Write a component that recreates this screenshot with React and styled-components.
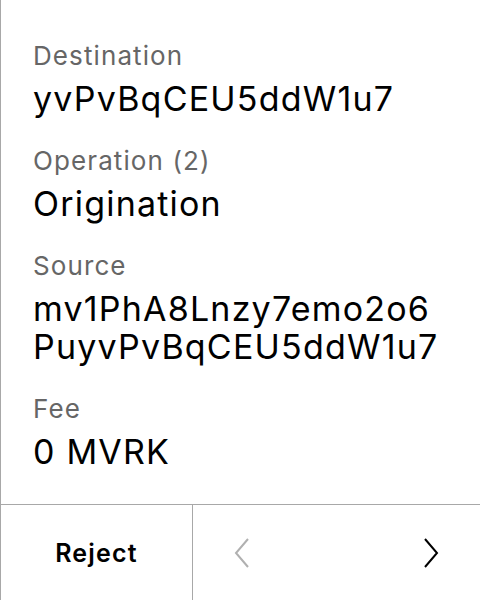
import React from "react";
import styled, { createGlobalStyle } from "styled-components";

const GlobalStyle = createGlobalStyle`
  html, body {
    margin: 0;
    padding: 0;
    background: #ffffff;
    font-family: Inter, "Noto Sans", sans-serif;
  }
`;

const Screen = styled.div`
  width: 480px;
  height: 600px;
  box-sizing: border-box;
  border-left: 1px solid #a8a8a8;
  display: flex;
  flex-direction: column;
  background: #fff;
`;

const Details = styled.div`
  flex: 1;
  padding: 40px 32px 0 32px;
  display: flex;
  flex-direction: column;
  gap: 27px;
`;

const Field = styled.div`
  display: flex;
  flex-direction: column;
`;

const Label = styled.div`
  font-size: 26px;
  line-height: 32px;
  letter-spacing: 1.1px;
  color: #666666;
  margin-bottom: 8px;
`;

const Value = styled.div`
  font-size: 34px;
  line-height: 38px;
  letter-spacing: 1.2px;
  color: #000;
  word-break: break-all;
`;

const Footer = styled.div`
  height: 96px;
  box-sizing: border-box;
  border-top: 1px solid #a8a8a8;
  display: flex;
`;

const RejectButton = styled.button`
  width: 192px;
  border: none;
  border-right: 1px solid #a8a8a8;
  background: none;
  font-family: inherit;
  font-size: 25px;
  letter-spacing: 1.2px;
  font-weight: 600;
  color: #000;
  padding: 0;
`;

const Nav = styled.div`
  flex: 1;
  display: flex;
  align-items: center;
  justify-content: space-between;
  padding: 0 40px 0 40px;
`;

const Arrow = styled.svg`
  width: 20px;
  height: 32px;
  stroke: ${(p) => (p.disabled ? "#b0b0b0" : "#000")};
  fill: none;
  stroke-width: 2;
`;

const fields = [
  { label: "Destination", value: "yvPvBqCEU5ddW1u7" },
  { label: "Operation (2)", value: "Origination" },
  { label: "Source", value: "mv1PhA8Lnzy7emo2o6PuyvPvBqCEU5ddW1u7" },
  { label: "Fee", value: "0 MVRK" },
];

export default function App() {
  return (
    <>
      <GlobalStyle />
      <Screen>
        <Details>
          {fields.map((f) => (
            <Field key={f.label}>
              <Label>{f.label}</Label>
              <Value>{f.value}</Value>
            </Field>
          ))}
        </Details>
        <Footer>
          <RejectButton>Reject</RejectButton>
          <Nav>
            <Arrow disabled viewBox="0 0 20 32">
              <path d="M15 2 L3 16 L15 30" />
            </Arrow>
            <Arrow viewBox="0 0 20 32">
              <path d="M5 2 L17 16 L5 30" />
            </Arrow>
          </Nav>
        </Footer>
      </Screen>
    </>
  );
}
